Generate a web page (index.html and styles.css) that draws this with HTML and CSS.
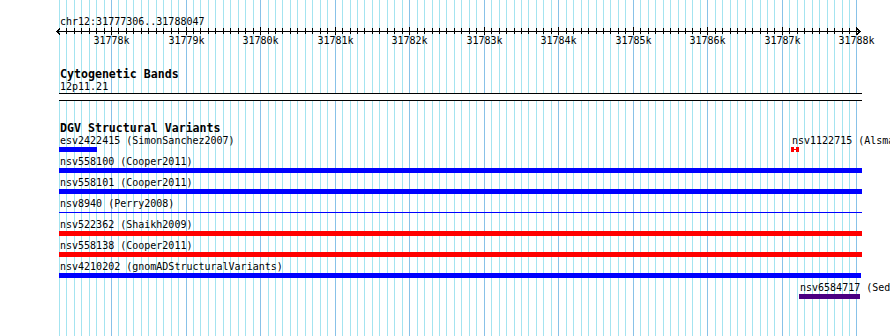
FILE: index.html
```html
<!DOCTYPE html>
<html lang="en">
<head>
  <meta charset="UTF-8">
  <title>chr12:31777306..31788047</title>
  <link rel="stylesheet" href="styles.css">
</head>
<body>

  <div class="panel">
    <!-- Grid lines behind the tracks -->
    <div class="grid" id="grid"></div>

    <div class="tracks">
      <!-- Ruler -->
      <div class="ruler-title">chr12:31777306..31788047</div>
      <svg class="scale" id="scale" width="890" height="20"></svg>

      <!-- Cytogenetic bands -->
      <div class="track-title">Cytogenetic Bands</div>
      <div class="band-name">12p11.21</div>
      <div class="band-box"></div>

      <!-- DGV -->
      <div class="track-title dgv">DGV Structural Variants</div>

      <div class="row">
        <div class="feat" style="margin-left:59px; width:38px">
          <div class="name">esv2422415 (SimonSanchez2007)</div>
          <div class="bar blue"></div>
        </div>
        <div class="feat" style="margin-left:694px; width:8px">
          <div class="name">nsv1122715 (Alsmadi2014)</div>
          <svg class="tiny" width="8" height="5" viewBox="0 0 8 5">
            <rect x="0" y="0" width="3" height="5" fill="#ff0000"/>
            <rect x="5" y="0" width="3" height="5" fill="#ff0000"/>
            <rect x="3" y="2" width="2" height="1" fill="#ff0000"/>
          </svg>
        </div>
      </div>

      <div class="row">
        <div class="feat" style="margin-left:59px; width:803px">
          <div class="name">nsv558100 (Cooper2011)</div>
          <div class="bar blue"></div>
        </div>
      </div>

      <div class="row">
        <div class="feat" style="margin-left:59px; width:803px">
          <div class="name">nsv558101 (Cooper2011)</div>
          <div class="bar blue"></div>
        </div>
      </div>

      <div class="row">
        <div class="feat" style="margin-left:59px; width:803px">
          <div class="name">nsv8940 (Perry2008)</div>
          <div class="bar thin blue"></div>
        </div>
      </div>

      <div class="row">
        <div class="feat" style="margin-left:59px; width:803px">
          <div class="name">nsv522362 (Shaikh2009)</div>
          <div class="bar red"></div>
        </div>
      </div>

      <div class="row">
        <div class="feat" style="margin-left:59px; width:803px">
          <div class="name">nsv558138 (Cooper2011)</div>
          <div class="bar red"></div>
        </div>
      </div>

      <div class="row">
        <div class="feat" style="margin-left:59px; width:802px">
          <div class="name">nsv4210202 (gnomADStructuralVariants)</div>
          <div class="bar blue"></div>
        </div>
      </div>

      <div class="row">
        <div class="feat" style="margin-left:799px; width:61px">
          <div class="name">nsv6584717 (Sedlazeck2017)</div>
          <div class="bar purple"></div>
        </div>
      </div>
    </div>
  </div>

  <script>
    // Escala: posicion en pixeles de una base
    const inicio = 31777306;
    const x0 = 59.26;
    const pxPorBase = 0.07455;
    const xDe = bp => Math.round(x0 + (bp - inicio) * pxPorBase);

    const grid = document.getElementById('grid');
    const scale = document.getElementById('scale');
    const ns = 'http://www.w3.org/2000/svg';

    function svgEl(tag, attrs) {
      const el = document.createElementNS(ns, tag);
      for (const k in attrs) el.setAttribute(k, attrs[k]);
      return el;
    }

    // Linea del eje con flechas
    scale.appendChild(svgEl('line', { x1: 57, y1: 4.5, x2: 860, y2: 4.5, class: 'axis' }));
    scale.appendChild(svgEl('polyline', { points: '60,1.5 57,4.5 60,7.5', class: 'axis' }));
    scale.appendChild(svgEl('polyline', { points: '857,1.5 860,4.5 857,7.5', class: 'axis' }));

    for (let bp = 31777300; bp <= 31788000; bp += 100) {
      const x = xDe(bp);
      const mayor = bp % 1000 === 0;

      // Linea de la rejilla
      const linea = document.createElement('div');
      linea.className = mayor ? 'line major' : 'line';
      linea.style.left = x + 'px';
      grid.appendChild(linea);

      // Marca del eje
      if (bp < inicio) continue;
      scale.appendChild(svgEl('line', {
        x1: x + 0.5, x2: x + 0.5,
        y1: mayor ? 0 : 1, y2: mayor ? 8 : 7,
        class: 'axis'
      }));

      if (mayor) {
        const t = svgEl('text', { x: x + 0.5, y: 16.5, class: 'tick-label' });
        t.textContent = (bp / 1000) + 'k';
        scale.appendChild(t);
      }
    }
  </script>
</body>
</html>
```

FILE: styles.css
```css
/* Estilos generales */
body {
  margin: 0;
  background: #ffffff;
}

.panel {
  position: relative;
  width: 890px;
  height: 336px;
  overflow: hidden;
  font-family: "DejaVu Sans Mono", "Liberation Mono", monospace;
  font-size: 10px;
  line-height: 11px;
  color: #000000;
}

/* Rejilla */
.grid {
  position: absolute;
  top: 0;
  left: 0;
  width: 100%;
  height: 100%;
}

.grid .line {
  position: absolute;
  top: 0;
  bottom: 0;
  width: 1px;
  background: #a4e4f0;
}

.grid .line.major {
  background: #88c2e8;
}

.tracks {
  position: relative; /* encima de la rejilla */
}

/* Regla */
.ruler-title {
  padding: 16px 0 0 60px;
  white-space: nowrap;
}

.scale {
  display: block;
  shape-rendering: crispEdges;
}

.scale .axis {
  stroke: #000000;
  stroke-width: 1;
  fill: none;
}

.scale .tick-label {
  font-family: "DejaVu Sans Mono", "Liberation Mono", monospace;
  font-size: 10px;
  text-anchor: middle;
  fill: #000000;
}

/* Titulos de pistas */
.track-title {
  margin-top: 21px;
  padding-left: 60px;
  font-size: 11.6px;
  font-weight: bold;
  line-height: 13px;
  white-space: nowrap;
}

.band-name {
  padding-left: 60px;
  height: 11px;
}

.band-box {
  margin: 1px 0 0 59px;
  width: 803px;
  height: 6px;
  background: #ffffff;
  border-top: 1px solid #000000;
  border-bottom: 1px solid #000000;
}

/* Filas de variantes */
.row {
  display: flex;
  height: 21px;
}

.feat {
  display: flex;
  flex-direction: column;
  flex-shrink: 0;
}

.feat .name {
  height: 11px;
  padding-left: 1px;
  white-space: nowrap;
}

.bar {
  margin-top: 1px;
  height: 5px;
}

.bar.thin {
  margin: 3px 0 2px;
  height: 1px;
}

.tiny {
  display: block;
  margin-top: 1px;
}

.blue {
  background: #0000ff;
}

.red {
  background: #ff0000;
}

.purple {
  background: #4b0082;
}
```
